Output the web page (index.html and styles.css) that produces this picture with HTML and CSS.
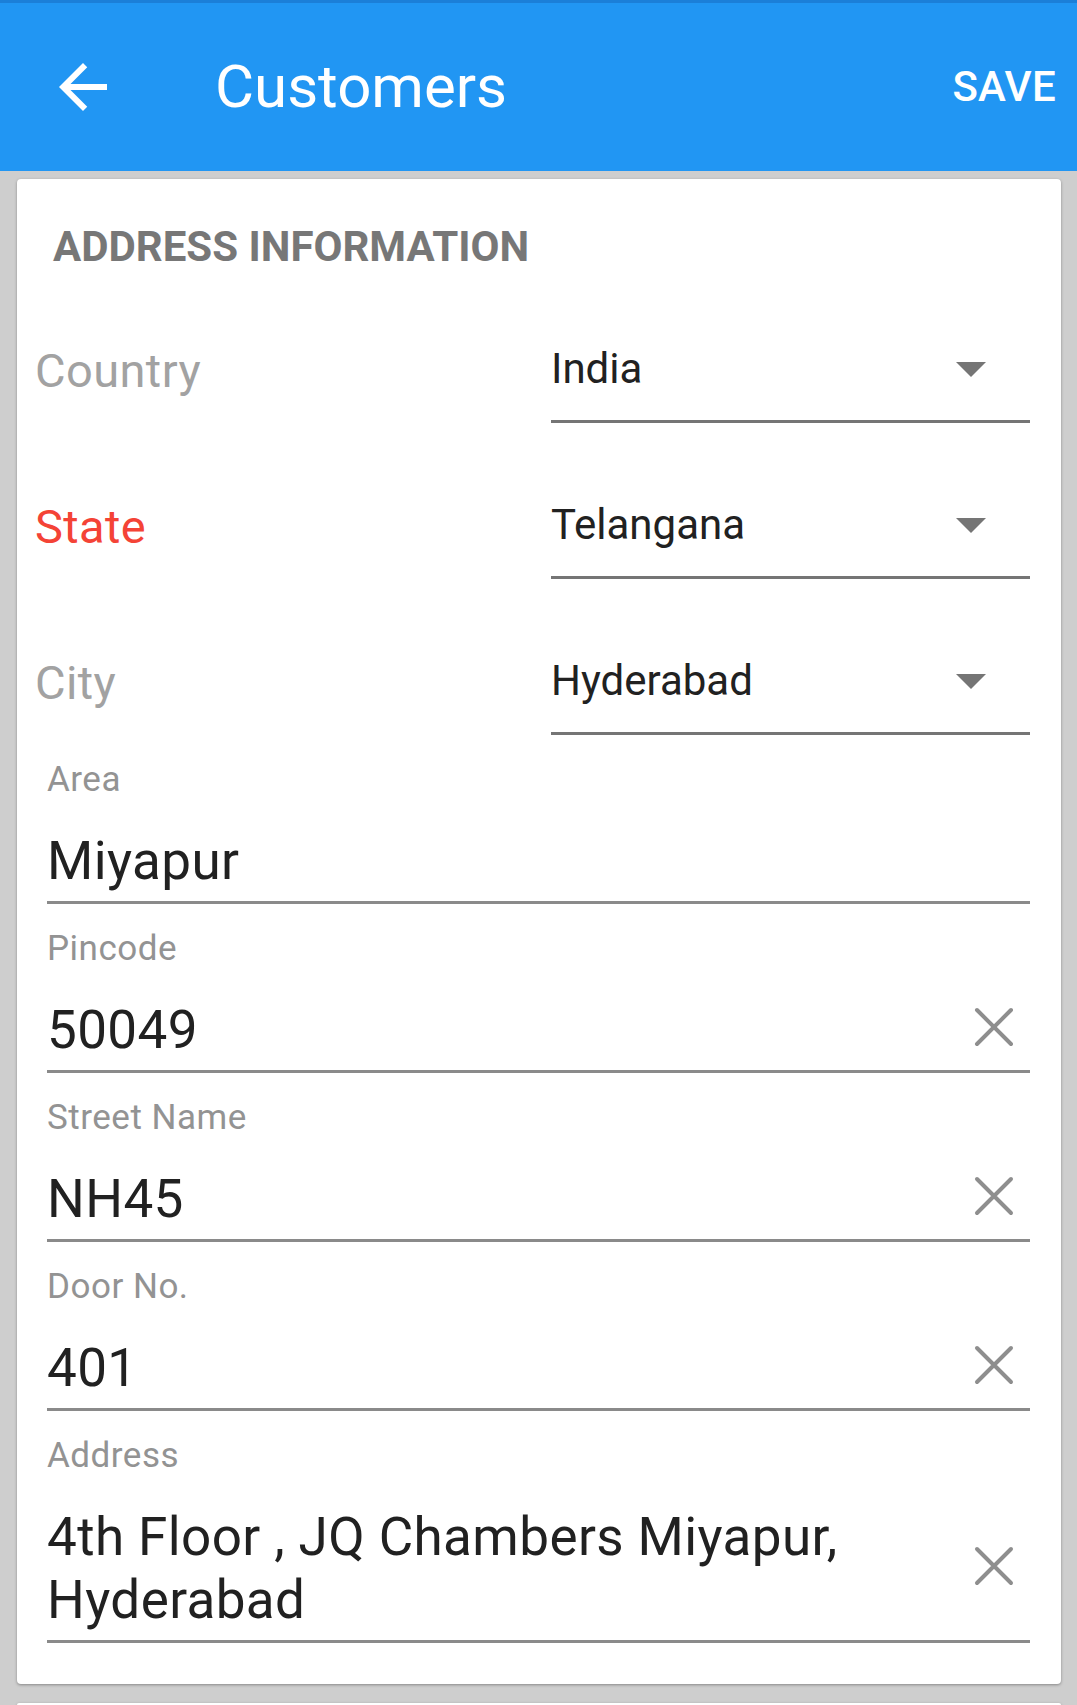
FILE: index.html
```html
<!DOCTYPE html>
<html>
<head>
  <meta charset="UTF-8">
  <title>Customers</title>
  <link rel="stylesheet" href="styles.css">
</head>
<body>
  <div class="appbar">
    <svg class="back" width="72" height="72" viewBox="0 0 24 24">
      <path d="M20 11H7.83l5.59-5.59L12 4l-8 8 8 8 1.41-1.41L7.83 13H20v-2z" fill="#fff"/>
    </svg>
    <span class="title">Customers</span>
    <span class="save">SAVE</span>
  </div>

  <div class="card">
    <h2 class="section">ADDRESS INFORMATION</h2>

    <div class="spin-row">
      <div class="spin-label">Country</div>
      <div class="spinner"><span class="spin-value">India</span><span class="caret"></span></div>
    </div>
    <div class="spin-row">
      <div class="spin-label required">State</div>
      <div class="spinner"><span class="spin-value">Telangana</span><span class="caret"></span></div>
    </div>
    <div class="spin-row">
      <div class="spin-label">City</div>
      <div class="spinner"><span class="spin-value">Hyderabad</span><span class="caret"></span></div>
    </div>

    <div class="field">
      <div class="field-label">Area</div>
      <div class="field-input"><span class="field-value">Miyapur</span></div>
    </div>
    <div class="field">
      <div class="field-label">Pincode</div>
      <div class="field-input">
        <span class="field-value">50049</span>
        <svg class="clear" width="40" height="40" viewBox="0 0 40 40"><path d="M3 3L37 37M37 3L3 37"/></svg>
      </div>
    </div>
    <div class="field">
      <div class="field-label">Street Name</div>
      <div class="field-input">
        <span class="field-value">NH45</span>
        <svg class="clear" width="40" height="40" viewBox="0 0 40 40"><path d="M3 3L37 37M37 3L3 37"/></svg>
      </div>
    </div>
    <div class="field">
      <div class="field-label">Door No.</div>
      <div class="field-input">
        <span class="field-value">401</span>
        <svg class="clear" width="40" height="40" viewBox="0 0 40 40"><path d="M3 3L37 37M37 3L3 37"/></svg>
      </div>
    </div>
    <div class="field">
      <div class="field-label">Address</div>
      <div class="field-input">
        <span class="field-value">4th Floor , JQ Chambers Miyapur,<br>Hyderabad</span>
        <svg class="clear" width="40" height="40" viewBox="0 0 40 40"><path d="M3 3L37 37M37 3L3 37"/></svg>
      </div>
    </div>
  </div>

  <div class="card card-next"></div>
</body>
</html>
```

FILE: styles.css
```css
  body {
    margin: 0;
    background-color: #cecece;
    font-family: Roboto, "Noto Sans", sans-serif;
    color: #212121;
}
  .appbar {
      display: flex;
      align-items: center;
      height: 168px;
      padding: 0 21px 0 47px;
      background-color: #2196f3;
      border-top: 3px solid #1b7fd8;
      color: #fff;
  }
  .back {
      display: block;
      flex: none;
  }
  .title {
      margin-left: 96px;
      font-size: 60px;
      line-height: 60px;
  }
  .save {
      margin-left: auto;
      font-size: 42px;
      line-height: 42px;
      font-weight: 500;
      letter-spacing: 0.3px;
  }
  .card {
      margin: 8px 16px 0 17px;
      padding: 47px 31px 41px 0;
      background-color: #fff;
      border-radius: 4px;
      box-shadow: 0 1px 3px rgba(0, 0, 0, 0.35);
  }
  .card-next {
      margin-top: 19px;
      height: 2px;
      padding: 0;
      border-radius: 4px 4px 0 0;
  }
  .section {
      margin: 0 0 0 36px;
      font-size: 42px;
      line-height: 41px;
      font-weight: 700;
      color: #777;
  }
  .spin-row {
      display: flex;
      height: 156px;
  }
  .spin-label {
      flex: 1;
      padding: 80px 0 0 18px;
      font-size: 47px;
      line-height: 47px;
      letter-spacing: 0.4px;
      color: #a2a2a2;
  }
  .spin-label.required {
      color: #f44336;
  }
  .spinner {
      display: flex;
      align-items: flex-start;
      width: 479px;
      box-sizing: border-box;
      padding-top: 81px;
      border-bottom: 3px solid #757575;
  }
  .spin-value {
      font-size: 42px;
      line-height: 42px;
  }
  .caret {
      margin: 14px 44px 0 auto;
      border-left: 15px solid transparent;
      border-right: 15px solid transparent;
      border-top: 15px solid #757575;
  }
  .field {
      padding: 25px 0 0 30px;
  }
  .field-label {
      font-size: 35px;
      line-height: 40px;
      letter-spacing: 0.5px;
      color: #939393;
  }
  .field-input {
      display: flex;
      align-items: center;
      margin-top: 30px;
      padding-bottom: 8px;
      border-bottom: 3px solid #8a8a8a;
  }
  .field-value {
      flex: 1;
      font-size: 53px;
      line-height: 63px;
      letter-spacing: 0.4px;
  }
  .clear {
      display: block;
      flex: none;
      margin: 0 16px 7px 0;
  }
  .clear path {
      stroke: #8e8e8e;
      stroke-width: 4;
      stroke-linecap: round;
  }
```
